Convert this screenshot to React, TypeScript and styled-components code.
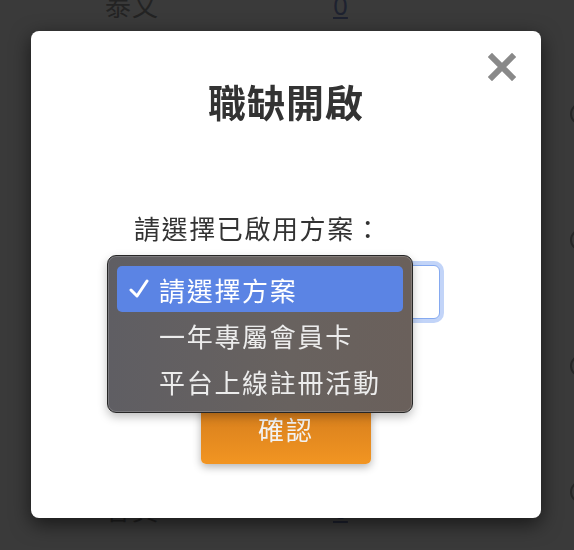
import React from "react";
import styled, { createGlobalStyle } from "styled-components";

const Global = createGlobalStyle`
  html, body { margin: 0; padding: 0; background: #3a3a3a; overflow: hidden; }
  body { font-family: "Noto Sans CJK TC", "Noto Sans", sans-serif; }
`;

const Page = styled.div`
  width: 592px;
  height: 570px;
  overflow: hidden;
  background: #3a3a3a;
  display: flex;
  flex-direction: column;
  margin-top: -11px;
`;

const BgRow = styled.div`
  height: 126px;
  flex: none;
  display: grid;
  grid-template-columns: 105px 228px 1fr 22px;
  align-items: start;
  color: #232323;
  font-size: 26px;
  line-height: 32px;
`;

const BgLabel = styled.span`
  grid-column: 2;
  letter-spacing: 1px;
`;

const BgValue = styled.span`
  grid-column: 3;
  text-decoration: underline;
  font-family: "Noto Sans", sans-serif;
  color: #1e2230;
`;

const BgCircle = styled.span`
  grid-column: 4;
  margin-top: 114px;
  width: 22px;
  height: 22px;
  border-radius: 50%;
  border: 2px solid #262626;
  box-sizing: border-box;
`;

const Modal = styled.div`
  position: fixed;
  left: 31px;
  top: 31px;
  width: 510px;
  height: 487px;
  background: #ffffff;
  border-radius: 8px;
  box-shadow: 0 6px 20px rgba(0, 0, 0, 0.6);
  display: flex;
  flex-direction: column;
  align-items: center;
  box-sizing: border-box;
  padding-top: 48px;
`;

const Close = styled.button`
  position: absolute;
  top: 21px;
  right: 24px;
  width: 30px;
  height: 30px;
  border: 0;
  background: transparent;
  padding: 0;
  display: flex;
  align-items: center;
  justify-content: center;
`;

const Title = styled.h2`
  margin: 0;
  font-size: 38px;
  line-height: 44px;
  font-weight: 700;
  color: #333333;
  letter-spacing: 1px;
`;

const Form = styled.div`
  margin-top: 88px;
  width: 306px;
  margin-left: 2px;
  display: flex;
  flex-direction: column;
  align-items: flex-start;
`;

const Label = styled.div`
  font-size: 26px;
  line-height: 34px;
  color: #333333;
  letter-spacing: 1.6px;
  white-space: nowrap;
`;

const SelectWrap = styled.div`
  position: relative;
  margin-top: 20px;
  width: 306px;
  height: 54px;
`;

const SelectBox = styled.div`
  width: 100%;
  height: 100%;
  box-sizing: border-box;
  border: 1px solid #86aaf0;
  border-radius: 6px;
  box-shadow: 0 0 0 4px rgba(120, 160, 240, 0.45);
  background: #fff;
`;

const Menu = styled.div`
  position: absolute;
  left: -27px;
  top: -10px;
  width: 306px;
  height: 158px;
  box-sizing: border-box;
  border-radius: 9px;
  background: linear-gradient(90deg, #5f5e63 0%, #68625f 60%, #6a605b 100%);
  border: 1px solid #262626;
  box-shadow: inset 0 0 0 1px rgba(255, 255, 255, 0.18), 0 4px 10px rgba(0, 0, 0, 0.25);
  padding: 10px 9px;
  display: flex;
  flex-direction: column;
  z-index: 2;
`;

const Option = styled.div<{ $active?: boolean }>`
  height: 46px;
  flex: none;
  display: flex;
  align-items: center;
  border-radius: 5px;
  background: ${(p) => (p.$active ? "#5b84e4" : "transparent")};
  color: ${(p) => (p.$active ? "#ffffff" : "#ececec")};
  font-size: 26px;
  letter-spacing: 1.7px;
  white-space: nowrap;
`;

const Check = styled.span`
  width: 40px;
  flex: none;
  display: flex;
  justify-content: center;
  padding-left: 2px;
`;

const Button = styled.button`
  margin-top: 83px;
  width: 170px;
  height: 62px;
  border: 0;
  border-radius: 5px;
  background: linear-gradient(180deg, #d27b1c 0%, #f29522 100%);
  color: #f2f2f2;
  font-family: "Noto Sans CJK TC", sans-serif;
  font-size: 26px;
  letter-spacing: 2px;
  box-shadow: 0 3px 8px rgba(0, 0, 0, 0.3);
  padding: 0 0 10px;
`;

export default function App() {
  return (
    <>
      <Global />
      <Page>
        <BgRow>
          <BgLabel>泰文</BgLabel>
          <BgValue>0</BgValue>
          <BgCircle />
        </BgRow>
        <BgRow><BgCircle /></BgRow>
        <BgRow><BgCircle /></BgRow>
        <BgRow><BgCircle /></BgRow>
        <BgRow>
          <BgLabel>會員</BgLabel>
          <BgValue>0</BgValue>
        </BgRow>
      </Page>
      <Modal>
        <Close aria-label="close">
          <svg width="28" height="28" viewBox="0 0 28 28">
            <path d="M4 4 L24 24 M24 4 L4 24" stroke="#898989" strokeWidth="6" strokeLinecap="square" />
          </svg>
        </Close>
        <Title>職缺開啟</Title>
        <Form>
          <Label>請選擇已啟用方案：</Label>
          <SelectWrap>
            <SelectBox />
            <Menu>
              <Option $active>
                <Check>
                  <svg width="20" height="20" viewBox="0 0 20 20">
                    <path d="M2 11 L8 17 L18 2" stroke="#ffffff" strokeWidth="3" fill="none" strokeLinecap="round" strokeLinejoin="round" />
                  </svg>
                </Check>
                請選擇方案
              </Option>
              <Option>
                <Check />
                一年專屬會員卡
              </Option>
              <Option>
                <Check />
                平台上線註冊活動
              </Option>
            </Menu>
          </SelectWrap>
        </Form>
        <Button>確認</Button>
      </Modal>
    </>
  );
}
